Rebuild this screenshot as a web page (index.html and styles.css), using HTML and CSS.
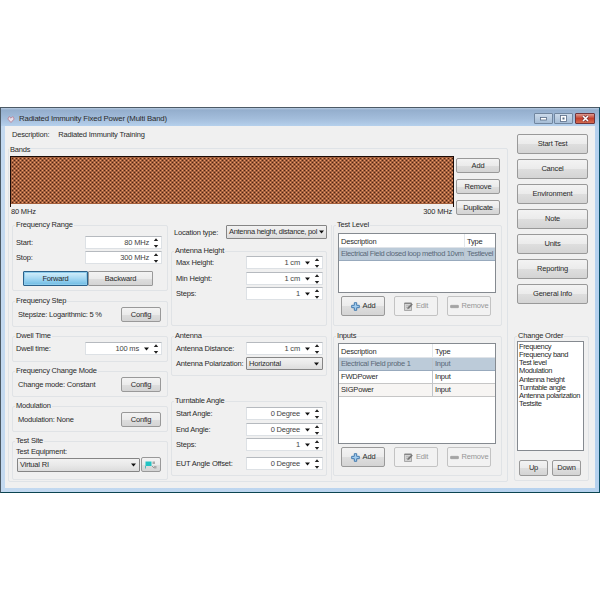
FILE: index.html
```
<!DOCTYPE html>
<html lang="en">
<head>
  <meta charset="UTF-8">
  <title>Radiated Immunity Fixed Power (Multi Band)</title>
  <link rel="stylesheet" href="styles.css">
</head>
<body>

<svg class="defs" width="0" height="0">
  <symbol id="plus" viewBox="0 0 9 9"><path d="M3.3 .7h2.4v2.6h2.6v2.4H5.7v2.6H3.3V5.7H.7V3.3h2.6z" fill="#a4cdee" stroke="#356fa8" stroke-width=".9"/></symbol>
  <symbol id="edit" viewBox="0 0 9 9"><path d="M.5 1h7v7.5h-7z" fill="#d4d4d4" stroke="#9a9a9a" stroke-width=".8"/><path d="M.5 1.3h7" stroke="#777" stroke-width="1"/><path d="M2 3.700h3M2 5.500h2" stroke="#aaa" stroke-width=".7"/><path d="M3.200 7.200l.7-2.200L7.600 1.400l1.200 1.200L5.200 6.400z" fill="#777"/></symbol>
  <symbol id="minus" viewBox="0 0 9 9"><rect x=".5" y="3.300" width="8" height="2.400" rx=".5" fill="#a5a5a5" stroke="#929292" stroke-width=".5"/></symbol>
  <symbol id="spin" viewBox="0 0 6 12"><path d="M.8 4L3 1.200 5.200 4zM.8 8L3 10.800 5.200 8z" fill="#222"/></symbol>
  <symbol id="drop" viewBox="0 0 5 4"><path d="M0 .5h5L2.500 3.500z" fill="#111"/></symbol>
</svg>

<div class="window">
  <div class="titlebar">
    <svg class="logo" width="8" height="8" viewBox="0 0 8 8"><path d="M4 7.500L.8 4 2.300 1.500 4 3.200l1.700-1.700L7.200 4z" fill="#e9dfea" stroke="#b98497" stroke-width=".9"/></svg>
    <span class="title">Radiated Immunity Fixed Power (Multi Band)</span>
    <span class="win-btn"><svg width="9" height="7"><rect x="1.500" y="2.500" width="6" height="2.500" fill="#fff" stroke="#596c85" stroke-width=".8"/></svg></span>
    <span class="win-btn"><svg width="9" height="7"><rect x="1.500" y=".5" width="6" height="6" fill="#fff" stroke="#596c85" stroke-width=".8"/><rect x="3.500" y="2.500" width="2" height="2" fill="#596c85"/></svg></span>
    <span class="win-btn close"><svg width="9" height="7"><path d="M2 1l5 5M7 1L2 6" stroke="#6b3038" stroke-width="2.800"/><path d="M2 1l5 5M7 1L2 6" stroke="#fff" stroke-width="1.600"/></svg></span>
  </div>

  <div class="client">
    <div class="main">
      <div class="description"><span>Description:</span><span>Radiated Immunity Training</span></div>

      <div class="group bands">
        <div class="legend">Bands</div>
        <div class="band-row">
          <div class="band-view">
            <svg class="hatch" width="444" height="51">
              <defs>
                <pattern id="cross" x=".5" y=".5" width="4" height="4" patternUnits="userSpaceOnUse">
                  <rect width="4" height="4" fill="#f09a68"/>
                  <path d="M-1 -1l6 6M5 -1l-6 6" stroke="#42170a" stroke-width=".9"/>
                </pattern>
              </defs>
              <rect width="444" height="48" fill="url(#cross)"/>
              <path d="M0 .5h444M.5 0v51M443.500 0v51" stroke="#1c0d08"/>
            </svg>
            <div class="band-scale"><span>80 MHz</span><span>300 MHz</span></div>
          </div>
          <div class="band-buttons">
            <button>Add</button>
            <button>Remove</button>
            <button>Duplicate</button>
          </div>
        </div>

        <div class="columns">
          <div class="col-left">
            <div class="group range">
              <div class="legend">Frequency Range</div>
              <div class="field"><span>Start:</span><div class="num">80 MHz<svg class="spin"><use href="#spin"/></svg></div></div>
              <div class="field"><span>Stop:</span><div class="num">300 MHz<svg class="spin"><use href="#spin"/></svg></div></div>
              <div class="direction"><button class="active">Forward</button><button>Backward</button></div>
            </div>
            <div class="group config">
              <div class="legend">Frequency Step</div>
              <div class="config-row"><span>Stepsize: Logarithmic: 5 %</span><button>Config</button></div>
            </div>
            <div class="group config">
              <div class="legend">Dwell Time</div>
              <div class="field"><span>Dwell time:</span><div class="num">100 ms<svg class="drop"><use href="#drop"/></svg><svg class="spin"><use href="#spin"/></svg></div></div>
            </div>
            <div class="group config">
              <div class="legend">Frequency Change Mode</div>
              <div class="config-row"><span>Change mode: Constant</span><button>Config</button></div>
            </div>
            <div class="group config">
              <div class="legend">Modulation</div>
              <div class="config-row"><span>Modulation: None</span><button>Config</button></div>
            </div>
            <div class="group site">
              <div class="legend">Test Site</div>
              <div class="site-label">Test Equipment:</div>
              <div class="site-row">
                <div class="select">Virtual RI<svg class="drop"><use href="#drop"/></svg></div>
                <button><svg width="14" height="10" viewBox="0 0 14 10"><path d="M1.500 1.500h6v4.500h-6z" fill="#22c3c3"/><path d="M1.500 6v2.500" stroke="#5bb" stroke-width="1"/><path d="M8.500 1.500h2.500v2.500h-2.500zM10 6h2.500v2.500h-2.500z" fill="#aaa"/><path d="M8 6l2 2" stroke="#999"/></svg></button>
              </div>
            </div>
          </div>

          <div class="col-mid">
            <div class="location"><span>Location type:</span><div class="select">Antenna height, distance, pol<svg class="drop"><use href="#drop"/></svg></div></div>
            <div class="group height">
              <div class="legend">Antenna Height</div>
              <div class="field"><span>Max Height:</span><div class="num">1 cm<svg class="drop"><use href="#drop"/></svg><svg class="spin"><use href="#spin"/></svg></div></div>
              <div class="field"><span>Min Height:</span><div class="num">1 cm<svg class="drop"><use href="#drop"/></svg><svg class="spin"><use href="#spin"/></svg></div></div>
              <div class="field"><span>Steps:</span><div class="num">1<svg class="drop"><use href="#drop"/></svg><svg class="spin"><use href="#spin"/></svg></div></div>
            </div>
            <div class="group antenna">
              <div class="legend">Antenna</div>
              <div class="field"><span>Antenna Distance:</span><div class="num">1 cm<svg class="drop"><use href="#drop"/></svg><svg class="spin"><use href="#spin"/></svg></div></div>
              <div class="field"><span>Antenna Polarization:</span><div class="select">Horizontal<svg class="drop"><use href="#drop"/></svg></div></div>
            </div>
            <div class="group turntable">
              <div class="legend">Turntable Angle</div>
              <div class="field"><span>Start Angle:</span><div class="num">0 Degree<svg class="drop"><use href="#drop"/></svg><svg class="spin"><use href="#spin"/></svg></div></div>
              <div class="field"><span>End Angle:</span><div class="num">0 Degree<svg class="drop"><use href="#drop"/></svg><svg class="spin"><use href="#spin"/></svg></div></div>
              <div class="field"><span>Steps:</span><div class="num">1<svg class="drop"><use href="#drop"/></svg><svg class="spin"><use href="#spin"/></svg></div></div>
              <div class="field offset"><span>EUT Angle Offset:</span><div class="num">0 Degree<svg class="drop"><use href="#drop"/></svg><svg class="spin"><use href="#spin"/></svg></div></div>
            </div>
          </div>

          <div class="col-right">
            <div class="group level">
              <div class="legend">Test Level</div>
              <div class="list">
                <div class="row head"><span>Description</span><span>Type</span></div>
                <div class="row selected"><span>Electrical Field closed loop method 10vm</span><span>Testlevel</span></div>
              </div>
              <div class="actions">
                <button><svg><use href="#plus"/></svg>Add</button>
                <button class="disabled"><svg><use href="#edit"/></svg>Edit</button>
                <button class="disabled"><svg><use href="#minus"/></svg>Remove</button>
              </div>
            </div>
            <div class="group inputs">
              <div class="legend">Inputs</div>
              <div class="list">
                <div class="row head"><span>Description</span><span>Type</span></div>
                <div class="row selected"><span>Electrical Field probe 1</span><span>Input</span></div>
                <div class="row"><span>FWDPower</span><span>Input</span></div>
                <div class="row alt"><span>SIGPower</span><span>Input</span></div>
              </div>
              <div class="actions">
                <button><svg><use href="#plus"/></svg>Add</button>
                <button class="disabled"><svg><use href="#edit"/></svg>Edit</button>
                <button class="disabled"><svg><use href="#minus"/></svg>Remove</button>
              </div>
            </div>
          </div>
        </div>
      </div>
    </div>

    <div class="side">
      <div class="side-buttons">
        <button>Start Test</button>
        <button>Cancel</button>
        <button>Environment</button>
        <button>Note</button>
        <button>Units</button>
        <button>Reporting</button>
        <button>General Info</button>
      </div>
      <div class="group order">
        <div class="legend">Change Order</div>
        <div class="order-list">
          <div>Frequency</div>
          <div>Frequency band</div>
          <div>Test level</div>
          <div>Modulation</div>
          <div>Antenna height</div>
          <div>Turntable angle</div>
          <div>Antenna polarization</div>
          <div>Testsite</div>
        </div>
        <div class="order-buttons"><button>Up</button><button>Down</button></div>
      </div>
    </div>
  </div>
</div>

</body>
</html>
```
FILE: styles.css
```
* { box-sizing: border-box; }
body { margin: 0; background: #fff; font: 7.5px/10px "Liberation Sans", Arial, sans-serif; letter-spacing: -.19px; color: #2a2a2a; overflow: hidden; }
svg { display: block; flex: none; }
span, button, .select, .num, .legend { white-space: nowrap; }
.defs { position: absolute; }

/* window frame */
.window { width: 600px; height: 386px; margin-top: 107px; border: 1px solid #4c5a66; border-right-color: #0c5068; border-bottom-color: #0b4450; background: linear-gradient(90deg, #c3d9f0, #b5d1ee); }
.titlebar { display: flex; align-items: center; height: 18px; padding: 3px 4px 0 6px; background: linear-gradient(#b9cce2 0, #94aecd 2px, #a3bddb 60%, #b5d0ec); }
.logo { margin-right: 4px; }
.title { flex: 1; font-size: 7.8px; letter-spacing: -.16px; }
.win-btn { display: flex; align-items: center; justify-content: center; width: 19px; height: 11px; margin-left: 1px; border: 1px solid #71869f; border-radius: 1px; background: linear-gradient(#cbdaea, #a6bdd6); }
.win-btn.close { width: 20px; margin-left: 2px; border-color: #70343b; background: linear-gradient(#dd9b91, #c4402c 50%, #d36a50); }
.client { display: flex; width: 590px; height: 362px; margin-left: 4px; background: #f0f0f0; }

/* shared controls */
button { display: flex; align-items: center; justify-content: center; margin: 0; padding: 0; border: 1px solid #999; border-radius: 2px; background: linear-gradient(#f3f3f3, #ebebeb 50%, #dedede 51%, #d4d4d4); font: inherit; letter-spacing: inherit; color: #2a2a2a; }
button.disabled { border-color: #c3c3c3; background: #f2f2f2; color: #969696; }
.group { border: 1px solid #e0e3e6; border-radius: 2px; }
.legend { width: max-content; height: 10px; margin: -6px 0 0 2px; padding: 0 1px; background: #f0f0f0; }
.field { display: flex; justify-content: space-between; align-items: center; }
.num { display: flex; align-items: center; justify-content: flex-end; width: 77px; height: 13px; padding-right: 2px; border: 1px solid #dde1e5; border-top-color: #b6babf; background: #fff; color: #444; }
.spin { width: 6px; height: 12px; margin-left: 4px; }
.drop { width: 5px; height: 4px; margin-left: 5px; }
.select { display: flex; align-items: center; justify-content: space-between; height: 13px; padding: 0 3px 0 2px; border: 1px solid #858585; border-radius: 1px; background: linear-gradient(#f2f2f2, #e9e9e9 50%, #dcdcdc); }

/* left part: bands and settings */
.main { width: 503px; }
.description { display: flex; gap: 9px; height: 22px; padding: 4px 0 0 7px; }
.bands { height: 334px; margin-left: 3px; border-color: #dfe3e7; }
.bands > .legend { height: 11px; margin-left: 0; line-height: 14px; }
.band-row { display: flex; gap: 2px; margin: 2px 0 0 1px; }
.band-view { width: 444px; }
.band-scale { display: flex; justify-content: space-between; padding: 0 2px 0 1px; }
.band-buttons { display: flex; flex-direction: column; gap: 6px; padding-top: 2px; }
.band-buttons button { width: 44px; height: 15px; }
.columns { display: flex; height: 255px; margin-top: 8px; }
.col-left { width: 156px; margin-left: 3px; }
.range { height: 66px; }
.range .field { height: 15px; padding: 0 5px 0 3px; }
.range .legend + .field { margin-top: 5px; }
.direction { display: flex; margin: 6px 0 0 10px; }
.direction button { width: 65px; height: 15px; border-radius: 1px; }
.direction .active { border-color: #2c628b; background: linear-gradient(#d6effb, #a5d8f3 50%, #6dbbe4); box-shadow: inset 0 0 0 1px #8dcbeb; }
.config { height: 26px; margin-top: 9px; }
.range + .config { margin-top: 10px; }
.config-row { display: flex; justify-content: space-between; align-items: center; margin-top: 1px; padding: 0 6px 0 5px; }
.config-row button { width: 40px; height: 15px; }
.config .field { height: 13px; margin-top: 1px; padding: 0 5px 0 3px; }
.site { height: 39px; margin-top: 9px; }
.site-label { height: 11px; margin-left: 3px; line-height: 11px; }
.site-row { display: flex; gap: 1px; align-items: center; margin-left: 4px; }
.site-row .select { width: 123px; height: 14px; }
.site-row button { width: 20px; height: 15px; }

.col-mid { width: 163px; margin-left: 1px; padding-left: 2px; border-right: 1px solid #e2e4e7; }
.location { display: flex; justify-content: space-between; height: 14px; padding: 0 4px 0 3px; }
.location .select { width: 101px; height: 14px; letter-spacing: -.3px; padding: 0 2px; }
.location .drop { margin-left: 2px; }
.location > span { padding-top: 3px; }
.col-mid .group { width: 156px; }
.col-mid .field { height: 13px; margin-bottom: 3px; padding: 0 3px 0 4px; }
.height { height: 75px; margin-top: 12px; }
.antenna { height: 40px; margin-top: 10px; }
.height .field:nth-child(3) { margin-bottom: 2px; }
.antenna .legend + .field { margin: 1px 0 2px; }
.antenna .select { width: 77px; }
.turntable { height: 75px; margin-top: 25px; }
.turntable .legend + .field { margin-top: 1px; }
.turntable .field:nth-child(3) { margin-bottom: 2px; }
.turntable .offset { margin-top: 6px; }

.col-right { width: 169px; margin-left: 1px; }
.level { height: 101px; }
.inputs { height: 140px; margin-top: 10px; }
.list { width: 158px; height: 60px; margin: 3px 0 0 4px; border: 1px solid #858a90; background: #fff; }
.inputs .list { height: 101px; margin-top: 2px; }
.row { display: grid; grid-template-columns: 125px 1fr; height: 13px; border-bottom: 1px solid #c6c6c6; line-height: 12px; }
.inputs .row { grid-template-columns: 93px 1fr; }
.row span { padding-left: 2px; }
.row span + span { border-left: 1px solid #c0c5cb; }
.row.head { height: 14px; border-bottom-color: #dfe3e8; line-height: 15px; }
.row.head span + span { border-color: #e3e7eb; }
.row.selected { background: #bccbd9; border-color: #98aabd; color: #5a6878; letter-spacing: -.34px; }
.inputs .row.selected { letter-spacing: -.28px; }
.row.alt { background: #f7f5f3; }
.actions { display: flex; gap: 9px; margin: 3px 0 0 7px; }
.actions button { width: 44px; height: 20px; gap: 3px; }
.actions svg { width: 9px; height: 9px; }

/* right side */
.side { width: 87px; padding: 8px 0 0 6px; }
.side-buttons { display: flex; flex-direction: column; gap: 5px; padding-left: 3px; }
.side-buttons button { width: 71px; height: 20px; }
.order { width: 75px; height: 145px; margin-top: 32px; }
.order-list { width: 67px; height: 110px; margin: 0 0 0 2px; padding: 1px 1px; border: 1px solid #858a90; background: #fff; line-height: 8.15px; letter-spacing: -.36px; white-space: nowrap; }
.order-buttons { display: flex; gap: 4px; margin: 9px 0 0 4px; }
.order-buttons button { width: 29px; height: 16px; }
```
